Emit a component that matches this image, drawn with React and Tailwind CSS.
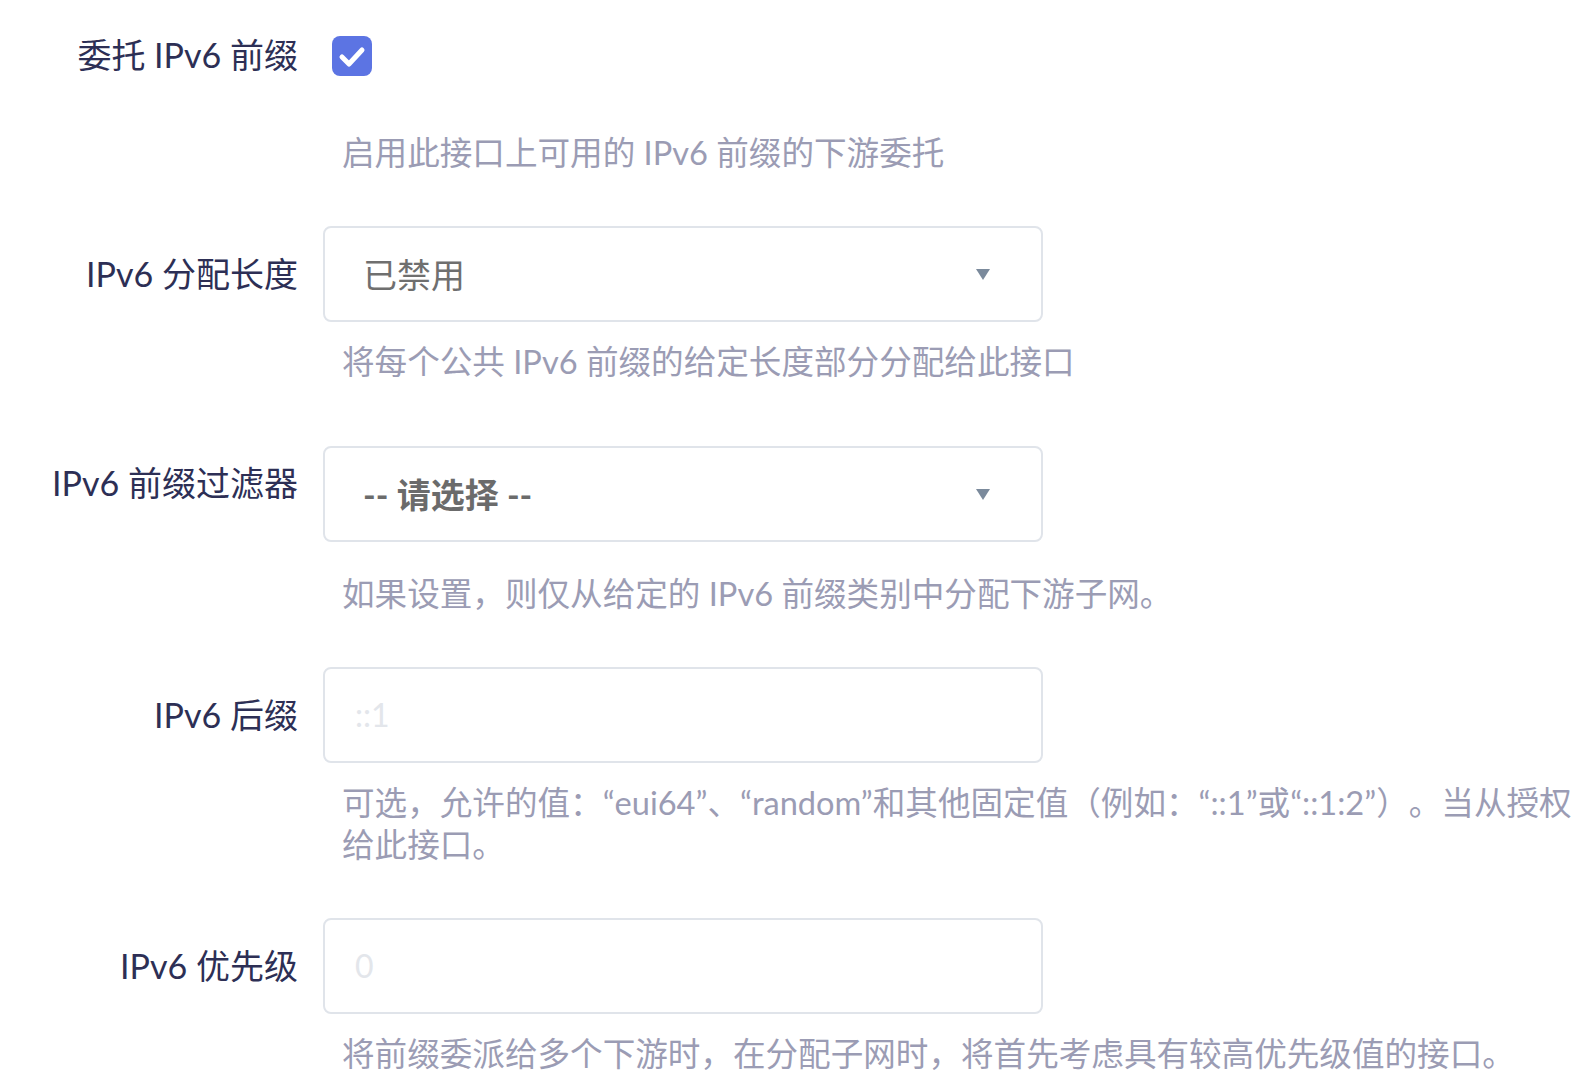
import React from "react";

const labelCls =
  "w-[298px] shrink-0 text-right text-[34px] leading-[42px] text-[#2d2f55] whitespace-nowrap";
const descCls =
  "pl-[19px] text-[32.6px] leading-[42px] text-[#9b9cb4] whitespace-nowrap [text-spacing-trim:space-all]";
const boxCls =
  "h-[96px] w-[720px] rounded-[8px] border-2 border-[#e0e4ea] bg-white flex items-center";

function Arrow() {
  return (
    <svg width="14" height="11" viewBox="0 0 14 11" className="shrink-0">
      <polygon points="0,0 14,0 7,11" fill="#7b8a9c" />
    </svg>
  );
}

export default function App() {
  return (
    <div className="w-[1572px] h-[1090px] overflow-hidden bg-white font-['Lato','Noto_Sans_CJK_SC',sans-serif] pt-[34px]">
      {/* Row 1 */}
      <div className="flex">
        <div className={labelCls}>委托 IPv6 前缀</div>
        <div className="ml-[25px]">
          <div className="ml-[9px] mt-[2px] w-[40px] h-[40px] rounded-[8px] bg-[#5c74e3] flex items-center justify-center">
            <svg width="40" height="40" viewBox="0 0 40 40">
              <polyline
                points="10,21 17,28 30,14"
                fill="none"
                stroke="#ffffff"
                strokeWidth="5"
                strokeLinecap="round"
                strokeLinejoin="round"
              />
            </svg>
          </div>
          <div className={descCls + " mt-[56px]"}>启用此接口上可用的 IPv6 前缀的下游委托</div>
        </div>
      </div>

      {/* Row 2 */}
      <div className="flex mt-[52px]">
        <div className={labelCls + " pt-[27px]"}>IPv6 分配长度</div>
        <div className="ml-[25px]">
          <div className={boxCls + " justify-between pl-[38px] pr-[51px]"}>
            <span className="text-[34px] text-[#6f6f6f]">已禁用</span>
            <Arrow />
          </div>
          <div className={descCls + " mt-[19px]"}>将每个公共 IPv6 前缀的给定长度部分分配给此接口</div>
        </div>
      </div>

      {/* Row 3 */}
      <div className="flex mt-[63px]">
        <div className={labelCls + " pt-[16px]"}>IPv6 前缀过滤器</div>
        <div className="ml-[25px]">
          <div className={boxCls + " justify-between pl-[38px] pr-[51px]"}>
            <span className="text-[34px] font-bold text-[#6b6b6b]">-- 请选择 --</span>
            <Arrow />
          </div>
          <div className={descCls + " mt-[31px]"}>如果设置，则仅从给定的 IPv6 前缀类别中分配下游子网。</div>
        </div>
      </div>

      {/* Row 4 */}
      <div className="flex mt-[52px]">
        <div className={labelCls + " pt-[27px]"}>IPv6 后缀</div>
        <div className="ml-[25px]">
          <div className={boxCls + " pl-[30px]"}>
            <span className="text-[32px] text-[#e3e6eb]">::1</span>
          </div>
          <div className={descCls + " mt-[19px]"}>
            可选，允许的值：“eui64”、“random”和其他固定值（例如：“::1”或“::1:2”）。当从授权服务器获取 IPv6 前缀时，使用后缀形成的 IPv6 地址分配
            <br />
            给此接口。
          </div>
        </div>
      </div>

      {/* Row 5 */}
      <div className="flex mt-[52px]">
        <div className={labelCls + " pt-[27px]"}>IPv6 优先级</div>
        <div className="ml-[25px]">
          <div className={boxCls + " pl-[30px]"}>
            <span className="text-[32px] text-[#e3e6eb]">0</span>
          </div>
          <div className={descCls + " mt-[19px]"}>将前缀委派给多个下游时，在分配子网时，将首先考虑具有较高优先级值的接口。</div>
        </div>
      </div>
    </div>
  );
}
